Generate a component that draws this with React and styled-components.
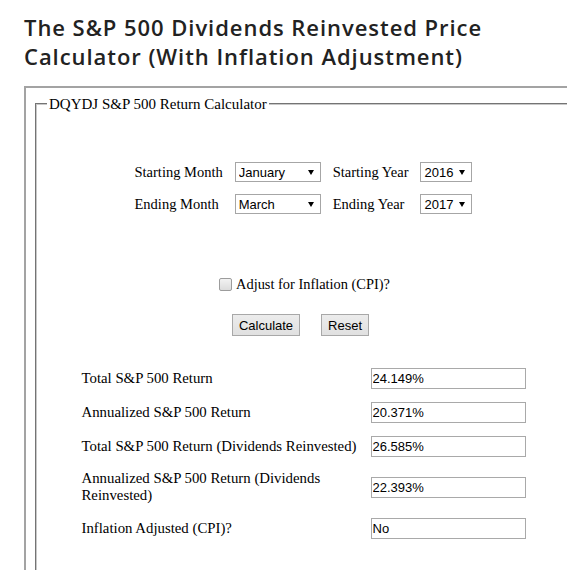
import React from "react";
import styled, { createGlobalStyle } from "styled-components";

const Global = createGlobalStyle`
  html, body { margin: 0; padding: 0; overflow: hidden; background: #fff; }
  body { font-family: "Liberation Serif", "Times New Roman", serif; color: #000; }
`;

const Page = styled.div`
  padding: 0 0 0 24px;
  width: 559px;
`;

const Title = styled.h1`
  margin: 13px 0 16px;
  font-family: "Open Sans", Lato, sans-serif;
  font-weight: 600;
  font-size: 22px;
  line-height: 28.6px;
  letter-spacing: 0.95px;
  color: #222;
  white-space: nowrap;
`;

const OuterBox = styled.div`
  box-sizing: border-box;
  width: 559px;
  border: 2px solid #a3a3a3;
  padding: 8px 9px 40px;
`;

const Fieldset = styled.fieldset`
  margin: 0;
  padding: 0 10px 40px;
  border: 2px groove #c8c8c8;
  min-width: 0;
`;

const Legend = styled.legend`
  padding: 0 2px;
  font-size: 15px;
  line-height: 16px;
`;

const SelectGrid = styled.div`
  margin-top: 50px;
  display: grid;
  grid-template-columns: repeat(4, auto);
  justify-content: center;
  column-gap: 12px;
  row-gap: 12px;
  align-items: center;
  font-size: 14.5px;
`;

const SelectWrap = styled.span`
  position: relative;
  display: inline-block;
  width: ${(p) => p.$w}px;
  height: 20px;
`;

const Select = styled.select`
  appearance: none;
  -webkit-appearance: none;
  box-sizing: border-box;
  width: 100%;
  height: 20px;
  margin: 0;
  padding: 0 0 0 3px;
  border: 1px solid #a6a6a6;
  border-radius: 0;
  background: #fff;
  font-family: "Liberation Sans", Arial, sans-serif;
  font-size: 13px;
  color: #000;
  outline: none;
`;

const Arrow = styled.svg`
  position: absolute;
  right: 7px;
  top: 8px;
  width: 6px;
  height: 5px;
  pointer-events: none;
`;

const CheckRow = styled.label`
  margin-top: 62px;
  display: flex;
  justify-content: center;
  align-items: center;
  font-size: 14.4px;
  line-height: 16px;
  padding-left: 2px;
`;

const Checkbox = styled.input`
  appearance: none;
  -webkit-appearance: none;
  box-sizing: border-box;
  width: 13px;
  height: 13px;
  margin: 0 4px 0 0;
  border: 1px solid #9c9c9c;
  border-radius: 2px;
  background: linear-gradient(#f2f2f2, #dcdcdc);
`;

const ButtonRow = styled.div`
  margin-top: 22px;
  display: flex;
  justify-content: center;
  gap: 21px;
  padding-right: 6px;
`;

const Button = styled.button`
  box-sizing: border-box;
  height: 22px;
  margin: 0;
  padding: 0 6px;
  border: 1px solid #a8a8a8;
  border-radius: 0;
  background: linear-gradient(#ececec, #e0e0e0);
  font-family: "Liberation Sans", Arial, sans-serif;
  font-size: 13px;
  color: #000;
`;

const Results = styled.div`
  margin-top: 25px;
  display: grid;
  grid-template-columns: 280px 155px;
  column-gap: 9px;
  justify-content: center;
  align-items: center;
`;

const Label = styled.div`
  padding: 7px 0;
  font-size: 14.8px;
  line-height: 17px;
`;

const Output = styled.input`
  box-sizing: border-box;
  width: 155px;
  height: 21px;
  margin: 6.5px 0;
  padding: 0 1px;
  border: 1px solid #a9a9a9;
  background: #fff;
  font-family: "Liberation Sans", Arial, sans-serif;
  font-size: 13px;
  color: #000;
  outline: none;
`;

const DropDown = ({ w, value, options }) => (
  <SelectWrap $w={w}>
    <Select defaultValue={value}>
      {options.map((o) => (
        <option key={o}>{o}</option>
      ))}
    </Select>
    <Arrow viewBox="0 0 6 5">
      <path d="M0 0 H6 L3 5 Z" fill="#000" />
    </Arrow>
  </SelectWrap>
);

const months = [
  "January", "February", "March", "April", "May", "June",
  "July", "August", "September", "October", "November", "December",
];
const years = ["2014", "2015", "2016", "2017"];

const results = [
  ["Total S&P 500 Return", "24.149%"],
  ["Annualized S&P 500 Return", "20.371%"],
  ["Total S&P 500 Return (Dividends Reinvested)", "26.585%"],
  ["Annualized S&P 500 Return (Dividends Reinvested)", "22.393%"],
  ["Inflation Adjusted (CPI)?", "No"],
];

export default function App() {
  return (
    <>
      <Global />
      <Page>
        <Title>
          The S&amp;P 500 Dividends Reinvested Price
          <br />
          Calculator (With Inflation Adjustment)
        </Title>
        <OuterBox>
          <Fieldset>
            <Legend>DQYDJ S&amp;P 500 Return Calculator</Legend>
            <SelectGrid>
              <span>Starting Month</span>
              <DropDown w={86} value="January" options={months} />
              <span>Starting Year</span>
              <DropDown w={52} value="2016" options={years} />
              <span>Ending Month</span>
              <DropDown w={86} value="March" options={months} />
              <span>Ending Year</span>
              <DropDown w={52} value="2017" options={years} />
            </SelectGrid>
            <CheckRow>
              <Checkbox type="checkbox" />
              Adjust for Inflation (CPI)?
            </CheckRow>
            <ButtonRow>
              <Button type="button">Calculate</Button>
              <Button type="button">Reset</Button>
            </ButtonRow>
            <Results>
              {results.map(([l, v]) => (
                <React.Fragment key={l}>
                  <Label>{l}</Label>
                  <Output readOnly value={v} />
                </React.Fragment>
              ))}
            </Results>
          </Fieldset>
        </OuterBox>
      </Page>
    </>
  );
}
